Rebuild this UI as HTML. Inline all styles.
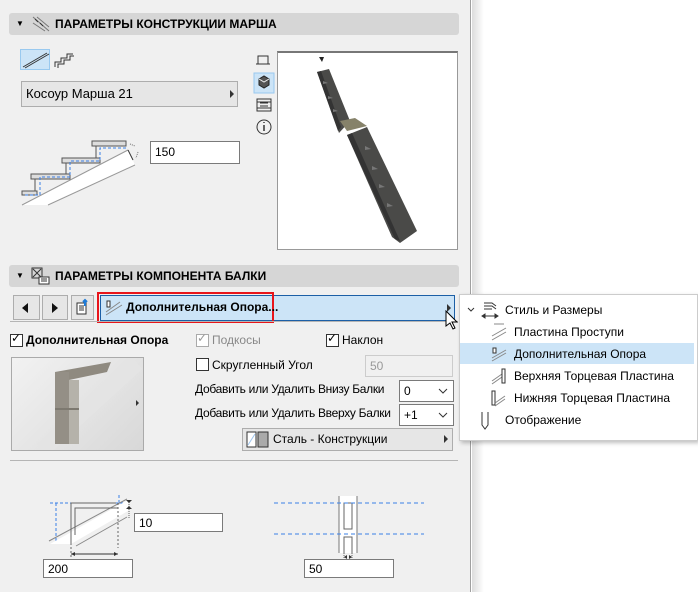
<!DOCTYPE html>
<html><head><meta charset="utf-8"><style>
*{box-sizing:border-box;margin:0;padding:0}
body{width:698px;height:592px;position:relative;overflow:hidden;background:#fff;font-family:"Liberation Sans",sans-serif;font-size:12px;color:#000}
.a{position:absolute}
.panel{left:0;top:0;width:471px;height:592px;background:#f0f0f0;border-right:1px solid #a0a0a0}
.shadow{left:472px;top:0;width:12px;height:592px;background:linear-gradient(90deg,#ddd,#fff)}
.hdr{background:#d6d6d6;border-radius:3px;height:22px;font-weight:bold;font-size:12px;line-height:22px}
.inp{background:#fff;border:1px solid #7a7a7a;padding-left:4px;line-height:18px;font-size:12px}
.cb{width:13px;height:13px;border:1px solid #333;background:#fff}
.btn{background:#e6e6e6;border:1px solid #adadad}
.tri{width:0;height:0;border-top:4px solid transparent;border-bottom:4px solid transparent;border-left:4px solid #333}
</style></head><body>
<div class="a panel"></div>
<div class="a shadow"></div>

<div class="a hdr" style="left:9px;top:13px;width:450px">
 <span class="a" style="left:7px;top:0;font-size:8px">▼</span>
 <svg class="a" style="left:22px;top:2px" width="20" height="18"><path d="M2 2L18 16M2 8L14 16M6 2L18 12" stroke="#777" stroke-width="1"/><path d="M4 4l3 3M9 8l3 3" stroke="#333"/></svg>
 <span class="a" style="left:46px">ПАРАМЕТРЫ КОНСТРУКЦИИ МАРША</span>
</div>

<div class="a" style="left:20px;top:49px;width:30px;height:21px;background:#cce4f7;border:1px solid #99c9ef"></div>
<svg class="a" style="left:20px;top:49px" width="60" height="21"><path d="M3 18L27 4M5 19L29 5" stroke="#333"/><path d="M35 18v-5h6v-4h6v-4h6" fill="none" stroke="#333"/><path d="M38 19v-4h6v-4h6v-4h4" fill="none" stroke="#333"/></svg>

<div class="a btn" style="left:21px;top:81px;width:217px;height:26px;line-height:24px;padding-left:4px;font-size:13px">Косоур Марша 21</div>
<div class="a tri" style="left:230px;top:90px"></div>

<svg class="a" style="left:20px;top:138px" width="125" height="72">
<path d="M2 67L108 12L115 27L28 67Z" fill="#fff"/>
<path d="M2 67L108 12M28 67L115 27" stroke="#999"/>
<path d="M72 3h34v5H72zM42 20h38v5H42zM11 36h39v5H11zM2 53h15v4H2z" fill="#ddd" stroke="#555"/>
<path d="M76 8v12M46 25v11M15 41v12" stroke="#555"/>
<path d="M106 10H80v13H50v16H20v18H4" stroke="#3a7fe6" stroke-dasharray="3 2" fill="none"/>
<path d="M108 12l5 10" stroke="#333"/><path d="M110 6l5 2M118 14l-2 6" stroke="#777" stroke-dasharray="1 1"/>
</svg>
<div class="a inp" style="left:150px;top:141px;width:90px;height:23px;line-height:21px">150</div>

<svg class="a" style="left:253px;top:52px" width="22" height="90">
<path d="M5 12V4h10v8M3 12h14" stroke="#333" fill="none"/>
<rect x="1" y="21" width="20" height="20" fill="#cce4f7" stroke="#99c9ef"/>
<path d="M6 27l5-3 5 3v6l-5 3-5-3z" fill="#555" stroke="#222"/><path d="M6 27l5 3 5-3" stroke="#eee" fill="none"/>
<rect x="4" y="47" width="14" height="12" fill="none" stroke="#333"/><path d="M7 51h8M7 54h8M4 50h14M4 56h14" stroke="#333"/>
<circle cx="11" cy="75" r="7" fill="none" stroke="#333"/><path d="M11 73v6M11 70v1" stroke="#333" stroke-width="1.5"/>
</svg>

<div class="a" style="left:277px;top:51px;width:181px;height:199px;background:#fff;border:1px solid #999;border-top:2px solid #777"></div>
<svg class="a" style="left:277px;top:51px" width="181" height="199">
<path d="M40 21l12-3 21 52-11 12z" fill="#4a4a48"/>
<path d="M40 21l4-1 20 56-3 4z" fill="#333"/>
<path d="M70 84l20-8 50 104-17 12-8-6z" fill="#4a4a48"/>
<path d="M70 84l5-2 48 108-5-2z" fill="#333"/>
<path d="M63 70l15-3 12 8-20 5z" fill="#86826a"/>
<path d="M42 6h5l-2 5z" fill="#222"/>
<g fill="#777"><path d="M46 30l5 2-5 1z"/><path d="M51 45l5 2-5 1z"/><path d="M56 58l5 2-5 1z"/><path d="M88 95l6 3-6 1z"/><path d="M95 115l6 3-6 1z"/><path d="M102 133l6 3-6 1z"/><path d="M110 152l6 3-6 1z"/></g>
</svg>

<div class="a hdr" style="left:9px;top:265px;width:450px">
 <span class="a" style="left:7px;top:0;font-size:8px">▼</span>
 <svg class="a" style="left:22px;top:2px" width="20" height="18"><rect x="1" y="1" width="10" height="10" fill="none" stroke="#333"/><path d="M2 2l8 8M10 2l-8 8" stroke="#333"/><rect x="8" y="10" width="10" height="7" fill="#fff" stroke="#333"/><path d="M10 12h6M10 14h6" stroke="#333"/></svg>
 <span class="a" style="left:46px">ПАРАМЕТРЫ КОМПОНЕНТА БАЛКИ</span>
</div>

<div class="a btn" style="left:13px;top:295px;width:27px;height:25px"></div>
<div class="a" style="left:22px;top:303px;border-top:5px solid transparent;border-bottom:5px solid transparent;border-right:6px solid #111"></div>
<div class="a btn" style="left:42px;top:295px;width:26px;height:25px"></div>
<div class="a" style="left:52px;top:303px;border-top:5px solid transparent;border-bottom:5px solid transparent;border-left:6px solid #111"></div>
<div class="a btn" style="left:71px;top:295px;width:23px;height:25px"></div>
<svg class="a" style="left:75px;top:298px" width="16" height="18"><rect x="2" y="5" width="9" height="11" fill="#fff" stroke="#333"/><path d="M4 8h5M4 10h5M4 12h5" stroke="#333"/><path d="M10 8V2M8 4l2-2 2 2" stroke="#1e7bd8" stroke-width="2" fill="none"/></svg>
<div class="a" style="left:100px;top:295px;width:355px;height:26px;background:#cce4f7;border:1px solid #1c5fa6"></div>
<div class="a" style="left:97px;top:292px;width:177px;height:31px;border:2px solid #e8151b"></div>
<svg class="a" style="left:104px;top:298px" width="20" height="18"><path d="M2 14L16 4M2 17L18 7" stroke="#888"/><rect x="3" y="3" width="3" height="6" fill="#fff" stroke="#333"/></svg>
<div class="a" style="left:126px;top:300px;font-weight:bold;font-size:12px">Дополнительная Опора...</div>
<div class="a tri" style="left:447px;top:304px"></div>
<div class="a" style="left:10px;top:321px;width:448px;height:1px;background:#b5b5b5"></div>

<div class="a cb" style="left:10px;top:334px"></div><div class="a" style="left:11px;top:331px;font-size:12px">✓</div>
<div class="a" style="left:26px;top:333px;font-weight:bold">Дополнительная Опора</div>
<div class="a cb" style="left:196px;top:334px;border-color:#aaa"></div><div class="a" style="left:197px;top:331px;color:#999">✓</div>
<div class="a" style="left:212px;top:333px;color:#888">Подкосы</div>
<div class="a cb" style="left:326px;top:334px"></div><div class="a" style="left:327px;top:331px">✓</div>
<div class="a" style="left:342px;top:333px">Наклон</div>

<div class="a" style="left:11px;top:357px;width:133px;height:94px;border:1px solid #aaa;background:linear-gradient(135deg,#f2f2f2,#d8d8d8)"></div>
<svg class="a" style="left:12px;top:358px" width="131" height="92">
<path d="M30 92L125 5" stroke="#e4e4e4" stroke-width="16"/>
<path d="M43 14l56-10-4 10-38 8z" fill="#8f8a80"/>
<path d="M43 14h14v72H43z" fill="#948f86"/><path d="M57 22h10v64H57z" fill="#b5b2aa"/>
<path d="M43 50h24v2H43z" fill="#7d7970"/>
</svg>
<div class="a" style="left:136px;top:400px;border-top:3px solid transparent;border-bottom:3px solid transparent;border-left:3px solid #333"></div>

<div class="a cb" style="left:196px;top:358px"></div>
<div class="a" style="left:212px;top:358px">Скругленный Угол</div>
<div class="a inp" style="left:365px;top:355px;width:88px;height:22px;background:#f0f0f0;border-color:#ccc;color:#999;line-height:20px">50</div>
<div class="a" style="left:195px;top:382px;letter-spacing:-0.3px">Добавить или Удалить Внизу Балки</div>
<div class="a inp" style="left:399px;top:380px;width:55px;height:22px;line-height:20px">0</div>
<div class="a" style="left:195px;top:406px;letter-spacing:-0.3px">Добавить или Удалить Вверху Балки</div>
<div class="a inp" style="left:399px;top:404px;width:55px;height:22px;line-height:20px">+1</div>
<svg class="a" style="left:438px;top:386px" width="10" height="40"><path d="M1 3l4 4 4-4M1 27l4 4 4-4" stroke="#333" fill="none"/></svg>
<div class="a btn" style="left:242px;top:428px;width:211px;height:23px"></div>
<svg class="a" style="left:246px;top:431px" width="24" height="17"><rect x="1" y="1" width="9" height="15" fill="#fff" stroke="#333"/><path d="M2 14L9 3" stroke="#9cc4ee"/><rect x="12" y="1" width="10" height="15" fill="#aaa" stroke="#333"/></svg>
<div class="a" style="left:273px;top:432px;font-size:12px">Сталь - Конструкции</div>
<div class="a tri" style="left:444px;top:435px"></div>
<div class="a" style="left:10px;top:460px;width:448px;height:1px;background:#b5b5b5"></div>

<svg class="a" style="left:45px;top:490px" width="90" height="70">
<path d="M5 13h75M11 13v40M74 5v10" stroke="#3a7fe6" stroke-dasharray="3 2"/>
<path d="M5 53h10M5 53L82 10M83 10v11L26 54H5z" fill="#fff"/>
<path d="M4 51L82 9M31 56L82 27" stroke="#888"/>
<path d="M26 53V13h45M30 45V18h43" stroke="#666" fill="none"/>
<path d="M26 53v40M73 13v45" stroke="#666" stroke-dasharray="2 2"/>
<path d="M26 64h47" stroke="#333"/><path d="M26 64l4-2v4zM73 64l-4-2v4z" fill="#333"/>
<path d="M84 12v7M84 19v10" stroke="#666" stroke-dasharray="1 1"/><path d="M81 10h6l-3 3zM81 19h6l-3-3z" fill="#333"/>
</svg>
<div class="a inp" style="left:134px;top:513px;width:89px;height:19px">10</div>
<div class="a inp" style="left:43px;top:559px;width:90px;height:19px">200</div>

<svg class="a" style="left:274px;top:495px" width="150" height="65">
<path d="M65 1h18v57H65z" fill="#fff"/>
<path d="M65 1v57M83 1v57" stroke="#777"/>
<rect x="70" y="8" width="8" height="26" fill="#fff" stroke="#666"/>
<path d="M70 58V42h8v16" fill="#fff" stroke="#666"/>
<path d="M0 8h150M0 39h150" stroke="#3a7fe6" stroke-dasharray="4 3"/>
<path d="M70 58v5M78 58v5" stroke="#666" stroke-dasharray="1 1"/><path d="M70 62l3-2v4zM78 62l-3-2v4z" fill="#333"/>
</svg>
<div class="a inp" style="left:304px;top:559px;width:90px;height:19px">50</div>

<div class="a" style="left:459px;top:294px;width:239px;height:147px;background:#fff;border:1px solid #ccc;box-shadow:2px 2px 4px rgba(0,0,0,.25)"></div>
<div class="a" style="left:460px;top:343px;width:234px;height:21px;background:#cce4f7"></div>
<svg class="a" style="left:464px;top:300px" width="45" height="140">
<path d="M4 8l3 3 3-3" stroke="#333" fill="none"/>
<path d="M20 3l8 0 4 3M20 6l8 0 4 3M20 9l8 0" stroke="#333" fill="none"/><path d="M18 16h16M18 16l3-2v4zM34 16l-3-2v4z" stroke="#333" fill="#333"/>
<path d="M30 24h10M28 36l14-8M28 40l14-8" stroke="#888"/>
<rect x="29" y="48" width="3" height="5" fill="#fff" stroke="#333"/><path d="M28 58l14-8M28 61l14-8" stroke="#888"/>
<path d="M28 81l10-7M28 84l10-7" stroke="#888"/><rect x="38" y="69" width="3" height="14" fill="none" stroke="#333"/>
<rect x="28" y="91" width="3" height="14" fill="none" stroke="#333"/><path d="M31 103l10-7M31 106l10-7" stroke="#888"/>
<path d="M18 112v13l3 4 3-4v-13" stroke="#333" fill="none"/>
</svg>
<div class="a" style="left:505px;top:303px">Стиль и Размеры</div>
<div class="a" style="left:514px;top:325px">Пластина Проступи</div>
<div class="a" style="left:514px;top:347px">Дополнительная Опора</div>
<div class="a" style="left:514px;top:369px">Верхняя Торцевая Пластина</div>
<div class="a" style="left:514px;top:391px">Нижняя Торцевая Пластина</div>
<div class="a" style="left:505px;top:413px">Отображение</div>

<svg class="a" style="left:445px;top:310px" width="14" height="22"><path d="M1 1v15l4-3 3 6 2-1-3-6h5z" fill="#fff" stroke="#000"/></svg>
</body></html>
